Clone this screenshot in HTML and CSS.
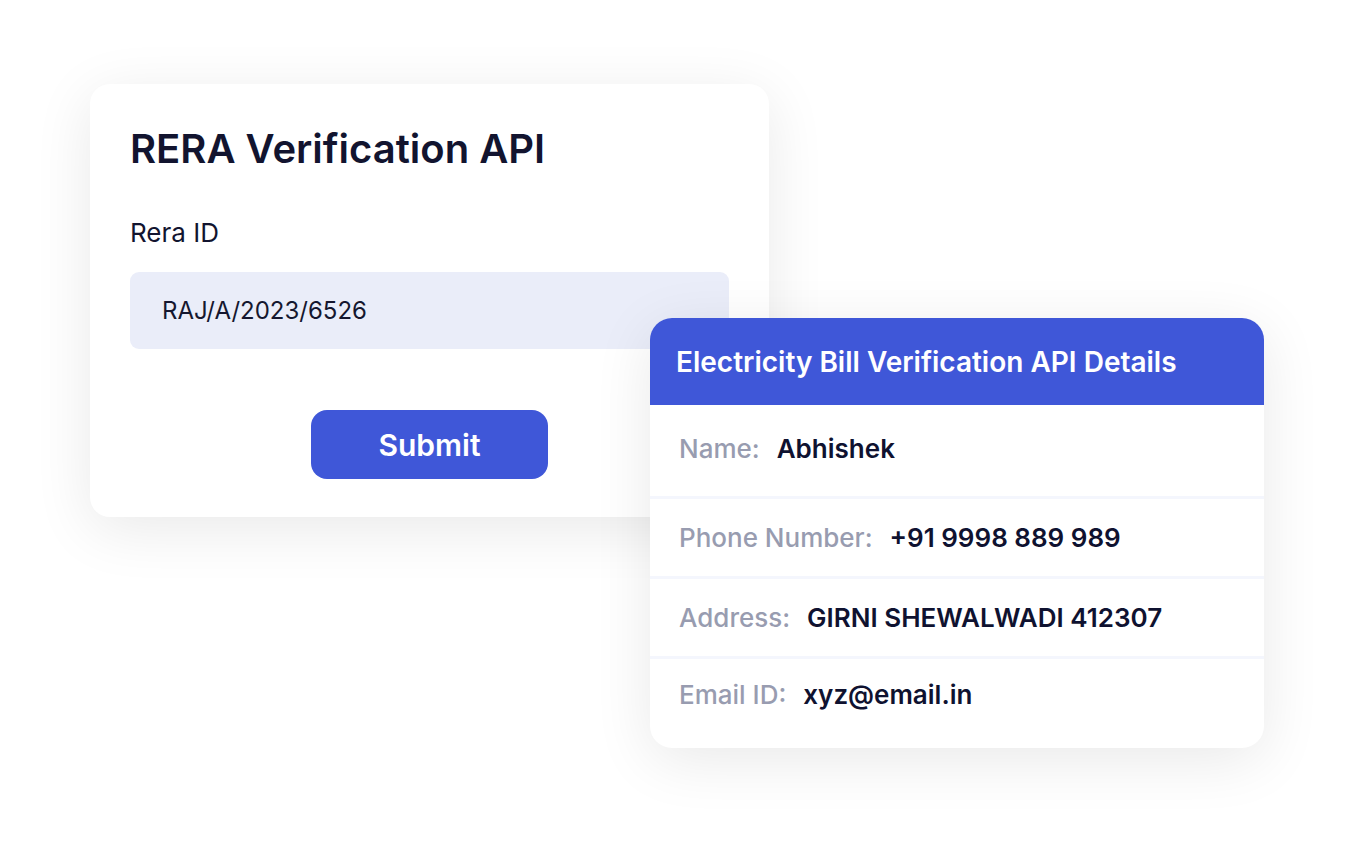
FILE: index.html
```html
<!DOCTYPE html>
<html lang="en">
<head>
  <meta charset="UTF-8">
  <meta name="viewport" content="width=device-width, initial-scale=1.0">
  <title>RERA Verification API</title>
  <link rel="stylesheet" href="styles.css">
</head>
<body>
  <div class="stage">
    <div class="card form-card">
      <h2 class="form-title">RERA Verification API</h2>
      <label class="field-label" for="rera-id">Rera ID</label>
      <div class="field" id="rera-id">RAJ/A/2023/6526</div>
      <div class="actions">
        <button class="submit-btn" type="button">Submit</button>
      </div>
    </div>

    <div class="card details-card">
      <div class="details-head">Electricity Bill Verification API Details</div>
      <div class="details-body">
        <div class="row">
          <span class="row-label">Name:</span>
          <span class="row-value">Abhishek</span>
        </div>
        <div class="row">
          <span class="row-label">Phone Number:</span>
          <span class="row-value">+91 9998 889 989</span>
        </div>
        <div class="row">
          <span class="row-label">Address:</span>
          <span class="row-value">GIRNI SHEWALWADI 412307</span>
        </div>
        <div class="row">
          <span class="row-label">Email ID:</span>
          <span class="row-value">xyz@email.in</span>
        </div>
      </div>
    </div>
  </div>
</body>
</html>
```

FILE: styles.css
```css
body {
  margin: 0;
  padding: 0;
  background-color: #fff;
  font-family: Inter, "Noto Sans", sans-serif;
  color: #12142f;
}

.stage {
  position: relative;
  width: 1355px;
  height: 845px;
  padding: 84px 0 0 90px;
  box-sizing: border-box;
}

.card {
  background-color: #fff;
  border-radius: 20px;
  box-shadow: 0 12px 60px rgba(0, 0, 0, 0.09);
}

/* left card */
.form-card {
  width: 679px;
  height: 433px;
  padding: 41px 40px 0 40px;
  box-sizing: border-box;
}

.form-title {
  margin: 0;
  font-size: 40px;
  font-weight: 600;
  line-height: 48px;
}

.field-label {
  display: block;
  margin-top: 44px;
  font-size: 26px;
  line-height: 32px;
  font-weight: 400;
}

.field {
  margin-top: 23px;
  height: 77px;
  padding: 0 32px;
  display: flex;
  align-items: center;
  background-color: #eaedf9;
  border-radius: 9px;
  font-size: 24px;
  color: #15172f;
}

.actions {
  display: flex;
  justify-content: center;
  margin-top: 61px;
}

.submit-btn {
  width: 237px;
  height: 69px;
  border: none;
  border-radius: 16px;
  background-color: #3f57d8;
  color: #fff;
  font-family: inherit;
  font-size: 30px;
  font-weight: 600;
  cursor: pointer;
}

/* right card */
.details-card {
  position: absolute;
  left: 650px;
  top: 318px;
  width: 614px;
  overflow: hidden;
  border-radius: 22px;
}

.details-head {
  height: 87px;
  padding: 0 26px;
  display: flex;
  align-items: center;
  background-color: #3f57d8;
  color: #fff;
  font-size: 28px;
  font-weight: 600;
}

.row {
  display: flex;
  align-items: center;
  gap: 17px;
  height: 77px;
  padding: 0 29px;
  border-top: 3px solid #f4f6fd;
  font-size: 26px;
}

.row:first-child {
  height: 91px;
  padding-bottom: 4px;
  border-top: none;
  box-sizing: border-box;
}

.row:last-child {
  height: 92px;
  padding-bottom: 18px;
  box-sizing: border-box;
}

.row-label {
  color: #989cb0;
  font-weight: 500;
}

.row-value {
  color: #0f1230;
  font-weight: 600;
}
```
